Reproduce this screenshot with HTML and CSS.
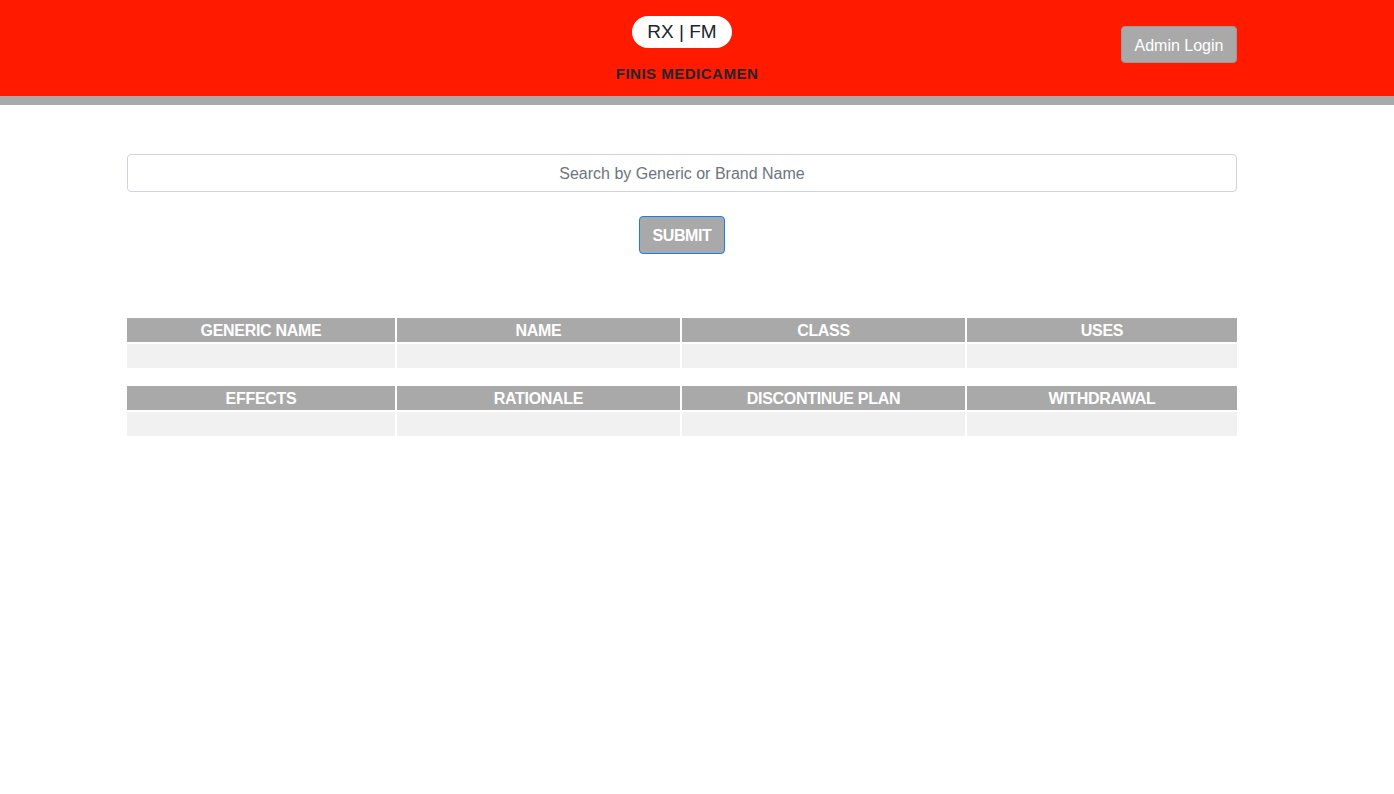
FILE: index.html
```html
<!DOCTYPE html>
<html lang="en">
<head>
<meta charset="utf-8">
<title>RX | FM</title>
<link rel="stylesheet" href="styles.css">
</head>
<body>
<header class="site-header">
  <div class="header-inner">
    <div class="brand">
      <div class="logo-pill">RX | FM</div>
      <div class="brand-name">FINIS MEDICAMEN</div>
    </div>
    <button class="admin-btn" type="button">Admin Login</button>
  </div>
</header>
<main class="content">
  <form class="search-form">
    <input class="search-input" type="text" placeholder="Search by Generic or Brand Name">
    <button class="submit-btn" type="button">SUBMIT</button>
  </form>
  <div class="results">
    <div class="grid-table">
      <div class="th">GENERIC NAME</div>
      <div class="th">NAME</div>
      <div class="th">CLASS</div>
      <div class="th">USES</div>
      <div class="td"></div>
      <div class="td"></div>
      <div class="td"></div>
      <div class="td"></div>
    </div>
    <div class="grid-table">
      <div class="th">EFFECTS</div>
      <div class="th">RATIONALE</div>
      <div class="th">DISCONTINUE PLAN</div>
      <div class="th">WITHDRAWAL</div>
      <div class="td"></div>
      <div class="td"></div>
      <div class="td"></div>
      <div class="td"></div>
    </div>
  </div>
</main>
</body>
</html>
```
FILE: styles.css
```css
* { box-sizing: border-box; }
html, body { margin: 0; padding: 0; background: #fff; }
body {
  font-family: "Liberation Sans", Arial, sans-serif;
  color: #212529;
}
.site-header {
  background: #ff1a00;
  height: 105px;
  border-bottom: 9px solid #a9a9a9;
}
.header-inner {
  width: 1110px;
  margin-left: 127px;
  height: 96px;
  display: grid;
  grid-template-columns: 1fr auto 1fr;
  align-items: start;
}
.brand {
  grid-column: 2;
  display: flex;
  flex-direction: column;
  align-items: center;
  padding-top: 16px;
}
.logo-pill {
  width: 100px;
  height: 32px;
  border-radius: 16px;
  background: #fff;
  color: #212529;
  font-size: 19px;
  line-height: 32px;
  text-align: center;
}
.brand-name {
  margin-top: 17px;
  padding-left: 10px;
  font-size: 15px;
  font-weight: bold;
  line-height: 17px;
  color: #23272b;
  letter-spacing: 0.5px;
}
.admin-btn {
  grid-column: 3;
  justify-self: end;
  margin-top: 26px;
  height: 37px;
  width: 116px;
  background: #a9a9a9;
  color: #fff;
  border: 1px solid #9a9a9a;
  border-radius: 4px;
  font-family: "Liberation Sans", Arial, sans-serif;
  font-size: 16px;
  padding: 2px 0 0;
}
.content {
  width: 1110px;
  margin-left: 127px;
  padding-top: 49px;
}
.search-form {
  display: flex;
  flex-direction: column;
  align-items: center;
}
.search-input {
  width: 100%;
  height: 38px;
  border: 1px solid #ced4da;
  border-radius: 4px;
  font-family: "Liberation Sans", Arial, sans-serif;
  font-size: 16px;
  text-align: center;
  color: #495057;
  padding: 2px 12px 0;
}
.search-input::placeholder { color: #6c757d; }
.submit-btn {
  margin-top: 24px;
  width: 86px;
  height: 38px;
  background: #a9a9a9;
  color: #fff;
  border: 1px solid #1a7cf0;
  border-radius: 4px;
  font-family: "Liberation Sans", Arial, sans-serif;
  font-size: 16px;
  font-weight: bold;
  letter-spacing: -0.4px;
  padding: 2px 0 0;
}
.results {
  margin-top: 64px;
  display: flex;
  flex-direction: column;
  gap: 18px;
}
.grid-table {
  display: grid;
  grid-template-columns: 268px 283px 283px 270px;
  grid-template-rows: 24px 24px;
  gap: 2px;
}
.th {
  background: #a9a9a9;
  color: #fff;
  font-weight: bold;
  font-size: 16px;
  line-height: 24px;
  padding-top: 1px;
  text-align: center;
  letter-spacing: -0.3px;
}
.td { background: #f1f1f1; }
```
